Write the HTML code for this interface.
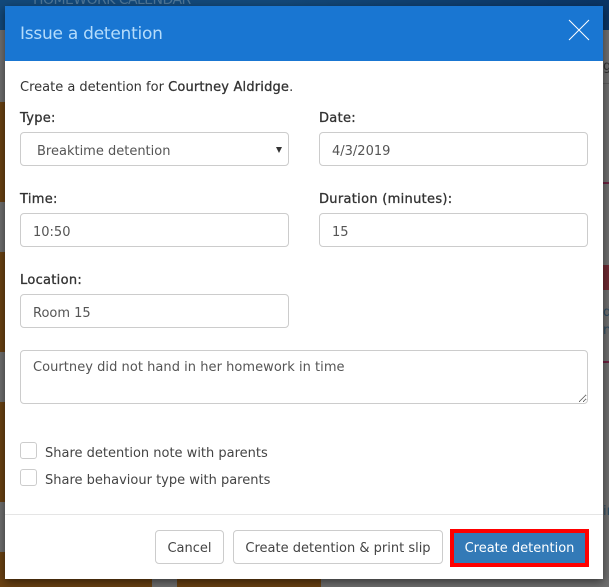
<!DOCTYPE html>
<html><head><meta charset="utf-8"><style>
html,body{margin:0;padding:0;width:609px;height:587px;overflow:hidden;background:#6f6f6f}
body{position:relative;font-family:"DejaVu Sans","Liberation Sans",sans-serif;font-size:13px;color:#333}
.a{position:absolute}
.t{position:absolute;white-space:nowrap;line-height:18px}
.l{-webkit-text-stroke:.3px #333;letter-spacing:.3px}
input,textarea,select{position:absolute;box-sizing:border-box;margin:0;background:#fff;border:1px solid #ccc;border-radius:4px;font:13px "DejaVu Sans","Liberation Sans",sans-serif;color:#555;outline:0;padding:4px 12px 0}
select{appearance:none;-webkit-appearance:none;padding-left:16px}
textarea{padding:8px 12px;resize:vertical;line-height:18px;letter-spacing:.04px}
.b{position:absolute;box-sizing:border-box;background:#fff;border:1px solid #ccc;border-radius:4px;color:#444;text-align:center;line-height:35px;white-space:nowrap;font-size:13px}
.c{position:absolute;box-sizing:border-box;width:17px;height:17px;left:20px;background:#fff;border:1px solid #ccc;border-radius:3px}
</style></head><body>
<div class="a" style="left:0;top:0;width:609px;height:30px;background:linear-gradient(90deg,#13497a,#13497a 45%,#0b3565)"></div>
<div class="t" style="left:33px;top:-9px;font-size:14px;letter-spacing:-.55px;color:#4d7698">HOMEWORK CALENDAR</div>
<div class="a" style="left:0;top:102px;width:5px;height:100px;background:#6b4212"></div>
<div class="a" style="left:0;top:252px;width:5px;height:100px;background:#6b4212"></div>
<div class="a" style="left:0;top:402px;width:5px;height:100px;background:#6b4212"></div>
<div class="a" style="left:0;top:552px;width:152px;height:35px;background:#6b4212"></div>
<div class="a" style="left:177px;top:552px;width:144px;height:35px;background:#6b4212"></div>
<div class="a" style="left:603px;top:83px;width:6px;height:1px;background:#5c5c5c"></div>
<div class="a" style="left:603px;top:182px;width:6px;height:2px;background:#6d2240"></div>
<div class="a" style="left:603px;top:265px;width:6px;height:25px;background:#6f2a32"></div>
<div class="a" style="left:603px;top:361px;width:6px;height:2px;background:#6d2240"></div>
<div class="t" style="left:603px;top:58px;color:#333">g</div>
<div class="t" style="left:603px;top:304px;color:#2f4d63">d</div>
<div class="t" style="left:603px;top:322px;color:#2f4d63">n</div>
<div class="t" style="left:603px;top:503px;color:#2f4d63">in</div>

<div class="a" style="left:5px;top:6px;width:598px;height:573px;background:#fff;box-shadow:0 3px 9px rgba(0,0,0,.5)"></div>
<div class="a" style="left:5px;top:6px;width:598px;height:55px;background:#1976d2"></div>
<div class="t" style="left:20px;top:23px;font-size:17px;line-height:22px;letter-spacing:-.25px;color:#b5dcfb">Issue a detention</div>
<svg class="a" style="left:568px;top:19px" width="22" height="22" viewBox="0 0 22 22"><path d="M1 1L21 21M21 1L1 21" stroke="#fff" stroke-width="1" fill="none"/></svg>

<div class="t" style="left:20px;top:79px">Create a detention for <b style="font-weight:normal;-webkit-text-stroke:.3px #333;letter-spacing:.18px">Courtney Aldridge</b>.</div>

<div class="t l" style="left:20px;top:110px">Type:</div>
<select style="left:20px;top:132px;width:269px;height:34px"><option>Breaktime detention</option></select>
<div class="a" style="left:276px;top:147px;width:0;height:0;border-left:3.5px solid transparent;border-right:3.5px solid transparent;border-top:6px solid #333"></div>
<div class="t l" style="left:319px;top:110px">Date:</div>
<input style="left:319px;top:132px;width:269px;height:34px" value="4/3/2019">

<div class="t l" style="left:20px;top:191px">Time:</div>
<input style="left:20px;top:213px;width:269px;height:34px" value="10:50">
<div class="t l" style="left:319px;top:191px">Duration (minutes):</div>
<input style="left:319px;top:213px;width:269px;height:34px" value="15">

<div class="t l" style="left:20px;top:272px">Location:</div>
<input style="left:20px;top:294px;width:269px;height:34px" value="Room 15">

<textarea style="left:20px;top:350px;width:568px;height:54px">Courtney did not hand in her homework in time</textarea>

<div class="c" style="top:442px"></div>
<div class="t" style="left:45px;top:445px;color:#444">Share detention note with parents</div>
<div class="c" style="top:469px"></div>
<div class="t" style="left:45px;top:472px;color:#444">Share behaviour type with parents</div>

<div class="a" style="left:5px;top:514px;width:598px;height:1px;background:#e5e5e5"></div>
<div class="b" style="left:155px;top:530px;width:69px;height:34px">Cancel</div>
<div class="b" style="left:233px;top:530px;width:210px;height:34px">Create detention &amp; print slip</div>
<div class="a" style="left:450px;top:529px;width:139px;height:38px;box-sizing:border-box;border:4px solid #f00;background:#337ab7;color:#fff;text-align:center;line-height:31px;white-space:nowrap">Create detention</div>
</body></html>
